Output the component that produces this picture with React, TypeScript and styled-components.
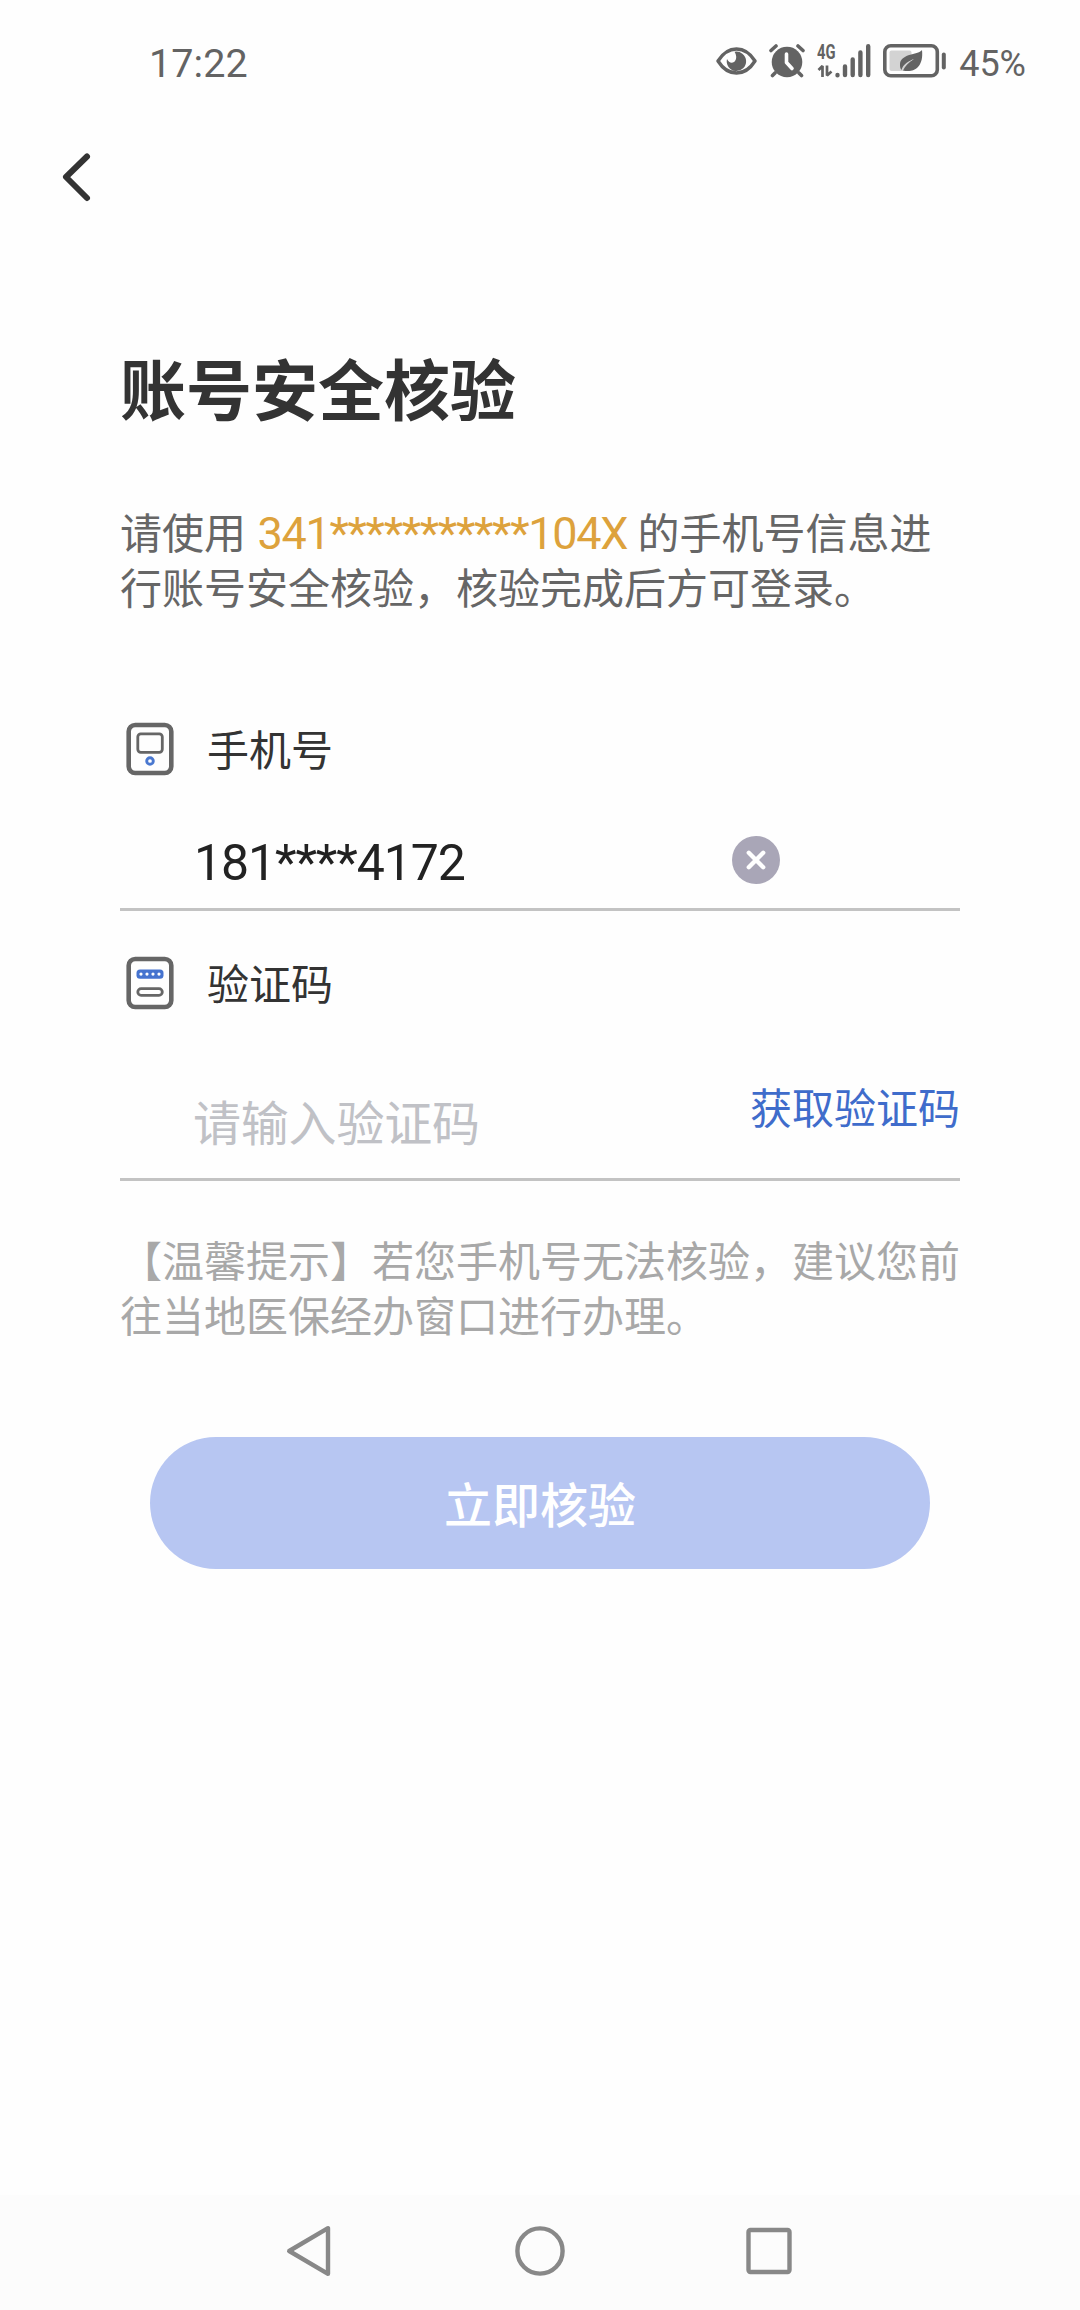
import React from "react";
import styled, { createGlobalStyle } from "styled-components";

const GlobalStyle = createGlobalStyle`
  * { box-sizing: border-box; }
  body {
    margin: 0;
    background: #fefefe;
    font-family: "Noto Sans CJK SC", "Noto Sans", sans-serif;
    text-spacing-trim: space-all;
  }
`;

const Screen = styled.div`
  display: flex;
  flex-direction: column;
  width: 1080px;
  height: 2310px;
  background: #fefefe;
`;

const StatusBar = styled.header`
  display: flex;
  justify-content: space-between;
  align-items: center;
  height: 88px;
  padding: 39px 54px 0 149px;
  color: #636363;
`;

const StatusText = styled.span<{ $size: number; $spacing: number }>`
  font-family: Roboto, sans-serif;
  font-size: ${(p) => p.$size}px;
  letter-spacing: ${(p) => p.$spacing}px;
  line-height: 50px;
`;

const StatusIcons = styled.div`
  display: flex;
  align-items: center;
  gap: 12px;
  svg { display: block; margin-bottom: 5px; }
`;

const TopBar = styled.nav`
  display: flex;
  align-items: center;
  height: 176px;
  padding: 2px 0 0 56px;
`;

const IconButton = styled.button`
  display: flex;
  padding: 0;
  border: 0;
  background: none;
`;

const Content = styled.main`
  display: flex;
  flex-direction: column;
  padding: 82px 120px 0;
`;

const Title = styled.h1`
  margin: 0;
  font-size: 66px;
  line-height: 80px;
  font-weight: 700;
  color: #333;
`;

const Paragraph = styled.p<{ $color: string; $top: number }>`
  margin: ${(p) => p.$top}px 0 0;
  font-size: 42px;
  line-height: 55px;
  white-space: nowrap;
  color: ${(p) => p.$color};
`;

const IdNumber = styled.span`
  font-family: Roboto, sans-serif;
  font-size: 45px;
  line-height: 1;
  letter-spacing: -1.3px;
  margin: 0 1px 0 2px;
  color: #dda23c;
`;

const LabelRow = styled.div<{ $top: number }>`
  display: flex;
  align-items: center;
  gap: 27px;
  height: 60px;
  margin-top: ${(p) => p.$top}px;
`;

const Label = styled.span`
  font-size: 42px;
  line-height: 56px;
  margin-bottom: 3px;
  color: #333;
`;

const Field = styled.div<{ $height: number; $top: number }>`
  display: flex;
  align-items: center;
  justify-content: space-between;
  height: ${(p) => p.$height}px;
  padding: ${(p) => p.$top}px 0 0 73px;
  border-bottom: 3px solid #c3c3c3;
`;

const PhoneValue = styled.span`
  margin-top: 4px;
  padding-left: 1px;
  font-family: Roboto, sans-serif;
  font-size: 50px;
  letter-spacing: -1.1px;
  line-height: 60px;
  color: #222;
`;

const ClearButton = styled(IconButton)`
  margin: 0 180px 2px 0;
`;

const Placeholder = styled.span`
  font-size: 48px;
  letter-spacing: -0.2px;
  line-height: 60px;
  color: #c0c1c6;
`;

const CodeLink = styled.a`
  margin-bottom: 27px;
  font-size: 42px;
  line-height: 56px;
  color: #3f6ccb;
`;

const SubmitButton = styled.button`
  align-self: center;
  width: 780px;
  height: 132px;
  margin-top: 96px;
  padding: 0 0 2px;
  border: 0;
  border-radius: 66px;
  background: #b7c6f2;
  color: #fff;
  font-family: inherit;
  font-size: 48px;
  font-weight: 500;
  line-height: 60px;
`;

const SystemNav = styled.footer`
  display: flex;
  align-items: center;
  justify-content: space-between;
  height: 115px;
  margin-top: auto;
  padding: 0 284px 3px;
  background: #fcfcfc;
`;

const EyeIcon = () => (
  <svg width="41" height="28" viewBox="0 0 41 28">
    <path d="M2 14C7 6 13 2 20.500 2S34 6 39 14C34 22 28 26 20.500 26S7 22 2 14Z" fill="none" stroke="#636363" strokeWidth="3.400" strokeLinejoin="round" />
    <path d="M18.500 4.800A9.700 9.700 0 1 1 11 12C12.500 15.500 15.500 16.500 18 15C20.800 13.200 21 8.500 18.500 4.800Z" fill="#636363" />
  </svg>
);

const AlarmIcon = () => (
  <svg width="36" height="34" viewBox="0 0 36 34">
    <circle cx="18" cy="18" r="15.300" fill="#636363" />
    <path d="M2 6.500L7 2M29 2L34 6.500M6 29L3.500 31.500M30 29L32.500 31.500" stroke="#636363" strokeWidth="3.600" strokeLinecap="round" />
    <path d="M17.500 10V18.500L23 24.500" fill="none" stroke="#fefefe" strokeWidth="3.600" strokeLinecap="round" strokeLinejoin="round" />
  </svg>
);

const SignalIcon = () => (
  <svg width="54" height="50" viewBox="0 -8 54 50">
    <text x="0" y="14.500" fontFamily="Roboto, sans-serif" fontWeight="700" fontSize="19.500" textLength="18.500" lengthAdjust="spacingAndGlyphs" fill="#636363">4G</text>
    <path d="M1.500 26L5.500 22V33M10 21.500V31.500L14.500 27.500" fill="none" stroke="#636363" strokeWidth="2.700" strokeLinejoin="bevel" />
    <path d="M20.500 31V31.200M28 22.500V31M35.700 15.500V31M43.400 8.500V31M51.200 2.200V31" stroke="#636363" strokeWidth="4.400" strokeLinecap="round" />
  </svg>
);

const BatteryIcon = () => (
  <svg width="64" height="34" viewBox="0 0 64 34">
    <rect x="1.800" y="1.800" width="52.500" height="30" rx="6" fill="none" stroke="#636363" strokeWidth="3.600" />
    <rect x="6.500" y="6.500" width="22" height="20.500" rx="2" fill="#d3d3d3" />
    <path d="M39 6C36 11 18 9 17 20C16.800 23 17.500 25 18.500 26C20 20 26 17 31 15C26 18 22 22 20 26.500C30 29 41 24 39 6Z" fill="#636363" />
    <path d="M60.800 10.500V23.500" stroke="#636363" strokeWidth="4" strokeLinecap="round" />
  </svg>
);

const BackIcon = () => (
  <svg width="40" height="56" viewBox="0 0 40 56">
    <path d="M31 7.500L10 28L31 49" fill="none" stroke="#333" strokeWidth="6" strokeLinecap="round" strokeLinejoin="round" />
  </svg>
);

const PhoneIcon = () => (
  <svg width="60" height="60" viewBox="0 0 60 60">
    <rect x="8.700" y="6" width="42.600" height="48" rx="6.500" fill="none" stroke="#666" strokeWidth="4.600" />
    <rect x="17.800" y="14.800" width="24.500" height="18.500" rx="3" fill="none" stroke="#666" strokeWidth="2.800" />
    <circle cx="30" cy="42" r="3.300" fill="#fff" stroke="#4a78d0" strokeWidth="2.900" />
  </svg>
);

const CodeIcon = () => (
  <svg width="60" height="60" viewBox="0 0 60 60">
    <rect x="8.700" y="6" width="42.600" height="48" rx="6.500" fill="none" stroke="#666" strokeWidth="4.600" />
    <rect x="16.500" y="16.500" width="27" height="9.300" rx="3.500" fill="#4573cf" />
    {[21, 27, 33, 39].map((x) => (
      <circle key={x} cx={x} cy="21.100" r="1.600" fill="#fff" />
    ))}
    <rect x="17.800" y="35.700" width="24.500" height="6.600" rx="3.300" fill="none" stroke="#666" strokeWidth="2.800" />
  </svg>
);

const ClearIcon = () => (
  <svg width="48" height="48" viewBox="0 0 48 48">
    <circle cx="24" cy="24" r="24" fill="#a9a6b7" />
    <path d="M16.800 16.800L31.200 31.200M31.200 16.800L16.800 31.200" stroke="#fff" strokeWidth="4.400" strokeLinecap="round" />
  </svg>
);

const navStroke = { fill: "none", stroke: "#888", strokeWidth: 4.4, strokeLinejoin: "round" as const };

export default function App() {
  return (
    <>
      <GlobalStyle />
      <Screen>
        <StatusBar>
          <StatusText $size={39.5} $spacing={0.1}>17:22</StatusText>
          <StatusIcons>
            <EyeIcon />
            <AlarmIcon />
            <SignalIcon />
            <BatteryIcon />
            <StatusText $size={36} $spacing={0}>45%</StatusText>
          </StatusIcons>
        </StatusBar>
        <TopBar>
          <IconButton aria-label="返回"><BackIcon /></IconButton>
        </TopBar>
        <Content>
          <Title>账号安全核验</Title>
          <Paragraph $color="#666" $top={77}>
            请使用 <IdNumber>341***********104X</IdNumber> 的手机号信息进
            <br />
            行账号安全核验，核验完成后方可登录。
          </Paragraph>
          <LabelRow $top={106}>
            <PhoneIcon />
            <Label>手机号</Label>
          </LabelRow>
          <Field $height={132} $top={35}>
            <PhoneValue>181****4172</PhoneValue>
            <ClearButton aria-label="清除"><ClearIcon /></ClearButton>
          </Field>
          <LabelRow $top={42}>
            <CodeIcon />
            <Label>验证码</Label>
          </LabelRow>
          <Field $height={168} $top={48}>
            <Placeholder>请输入验证码</Placeholder>
            <CodeLink>获取验证码</CodeLink>
          </Field>
          <Paragraph $color="#a8a8a8" $top={50}>
            【温馨提示】若您手机号无法核验，建议您前
            <br />
            往当地医保经办窗口进行办理。
          </Paragraph>
          <SubmitButton>立即核验</SubmitButton>
        </Content>
        <SystemNav>
          <svg width="50" height="56" viewBox="0 0 50 56">
            <path d="M44 5.200V50.800L5.200 28Z" {...navStroke} />
          </svg>
          <svg width="56" height="56" viewBox="0 0 56 56">
            <circle cx="30" cy="28" r="22.600" {...navStroke} />
          </svg>
          <svg width="54" height="56" viewBox="0 0 54 56">
            <rect x="6.500" y="7" width="41" height="42" rx="2" {...navStroke} />
          </svg>
        </SystemNav>
      </Screen>
    </>
  );
}
